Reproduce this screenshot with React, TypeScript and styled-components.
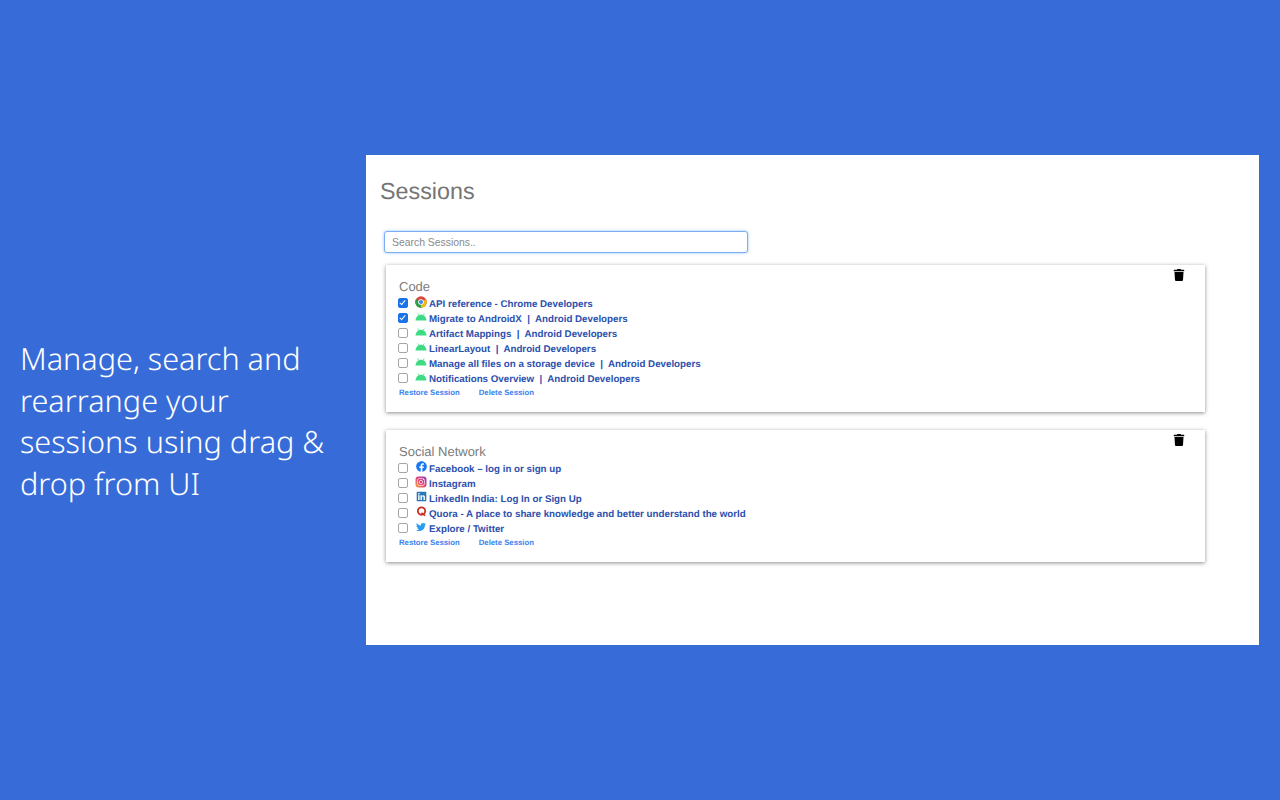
import React from 'react';
import styled, { createGlobalStyle } from 'styled-components';
import { FaFacebook, FaLinkedin, FaTrash, FaTwitter } from 'react-icons/fa';

const GlobalStyle = createGlobalStyle`
  html, body {
    margin: 0;
    padding: 0;
    background: #376cd8;
    text-rendering: geometricPrecision;
  }
`;

type Tab = { title: string; icon: React.ReactNode; checked?: boolean };

function ChromeIcon() {
  return (
    <svg width='12' height='12' viewBox='0 0 24 24'>
      <circle cx='12' cy='12' r='11.5' fill='#d9463a' />
      <path d='M12 12 L22 6.5 A11.5 11.5 0 0 1 12 23.5 Z' fill='#f2b90f' />
      <path d='M12 12 L12 23.5 A11.5 11.5 0 0 1 2 6.5 Z' fill='#2f9e50' />
      <circle cx='12' cy='12' r='5.6' fill='#fff' />
      <circle cx='12' cy='12' r='4.2' fill='#4a84e8' />
    </svg>
  );
}

function AndroidIcon() {
  return (
    <svg width='12' height='8' viewBox='0 0 24 16'>
      <path d='M1 15 C1.5 8 6 3.5 12 3.5 C18 3.5 22.5 8 23 15 Z' fill='#3ddc84' />
      <path d='M5.5 1 L8 5.5 M18.5 1 L16 5.5' stroke='#3ddc84' strokeWidth='1.6' />
    </svg>
  );
}

function InstagramIcon() {
  return (
    <svg width='12' height='12' viewBox='0 0 24 24'>
      <defs>
        <linearGradient id='insta' x1='0' y1='1' x2='1' y2='0'>
          <stop offset='0' stopColor='#f9a13c' />
          <stop offset='0.5' stopColor='#e0447c' />
          <stop offset='1' stopColor='#8a3ac0' />
        </linearGradient>
      </defs>
      <rect x='1' y='1' width='22' height='22' rx='6' fill='url(#insta)' />
      <rect x='5' y='5' width='14' height='14' rx='4' fill='none' stroke='#fff' strokeWidth='1.6' opacity='0.8' />
      <circle cx='12' cy='12' r='3.4' fill='none' stroke='#fff' strokeWidth='1.6' opacity='0.8' />
      <circle cx='17' cy='7' r='1.2' fill='#fff' />
    </svg>
  );
}

function QuoraIcon() {
  return (
    <svg width='11' height='11' viewBox='0 0 24 24'>
      <circle cx='12' cy='11' r='8' fill='none' stroke='#c8302a' strokeWidth='4' />
      <path d='M12 15 L20 21' stroke='#c8302a' strokeWidth='3.5' />
    </svg>
  );
}

const codeTabs: Tab[] = [
  { title: 'API reference - Chrome Developers', icon: <ChromeIcon />, checked: true },
  { title: 'Migrate to AndroidX  |  Android Developers', icon: <AndroidIcon />, checked: true },
  { title: 'Artifact Mappings  |  Android Developers', icon: <AndroidIcon /> },
  { title: 'LinearLayout  |  Android Developers', icon: <AndroidIcon /> },
  { title: 'Manage all files on a storage device  |  Android Developers', icon: <AndroidIcon /> },
  { title: 'Notifications Overview  |  Android Developers', icon: <AndroidIcon /> },
];

const socialTabs: Tab[] = [
  { title: 'Facebook – log in or sign up', icon: <FaFacebook color='#1877f2' size={11} /> },
  { title: 'Instagram', icon: <InstagramIcon /> },
  { title: 'LinkedIn India: Log In or Sign Up', icon: <FaLinkedin color='#2878b5' size={11} /> },
  { title: 'Quora - A place to share knowledge and better understand the world', icon: <QuoraIcon /> },
  { title: 'Explore / Twitter', icon: <FaTwitter color='#2a9df0' size={10} /> },
];

function SessionCard({ name, tabs }: { name: string; tabs: Tab[] }) {
  return (
    <Card>
      <DeleteIcon>
        <FaTrash size={12} />
      </DeleteIcon>
      <CardTitle>{name}</CardTitle>
      {tabs.map((tab) => (
        <TabRow key={tab.title}>
          <TabCheck type='checkbox' defaultChecked={tab.checked} />
          <TabIcon>{tab.icon}</TabIcon>
          <TabLink>{tab.title}</TabLink>
        </TabRow>
      ))}
      <Actions>
        <ActionLink>Restore Session</ActionLink>
        <ActionLink>Delete Session</ActionLink>
      </Actions>
    </Card>
  );
}

export default function App() {
  return (
    <Page>
      <GlobalStyle />
      <Caption>Manage, search and rearrange your sessions using drag &amp; drop from UI</Caption>
      <Panel>
        <Title>Sessions</Title>
        <Search placeholder='Search Sessions..' />
        <CardList>
          <SessionCard name='Code' tabs={codeTabs} />
          <SessionCard name='Social Network' tabs={socialTabs} />
        </CardList>
      </Panel>
    </Page>
  );
}

const Page = styled.div`
  display: flex;
  box-sizing: border-box;
  width: 1280px;
  height: 800px;
  padding-top: 155px;
  background: #376cd8;
  overflow: hidden;
`;

const Caption = styled.div`
  box-sizing: border-box;
  flex: 0 0 366px;
  padding: 183px 30px 0 20px;
  color: #fff;
  font-family: 'Noto Sans', sans-serif;
  font-size: 30.6px;
  font-weight: 300;
  line-height: 41.5px;
`;

const Panel = styled.div`
  box-sizing: border-box;
  width: 893px;
  height: 490px;
  padding: 22px 54px 0 14px;
  background: #fff;
  font-family: 'Liberation Sans', Arial, sans-serif;
`;

const Title = styled.h1`
  margin: 0;
  color: #757575;
  font-size: 23.3px;
  font-weight: 400;
  line-height: 28px;
`;

const Search = styled.input`
  display: block;
  box-sizing: border-box;
  width: 364px;
  height: 22px;
  margin: 26px 0 12px 4px;
  padding: 0 7px;
  border: 1px solid #7ab0f2;
  border-radius: 3px;
  box-shadow: 0 0 3px rgba(80, 150, 240, 0.6);
  font-family: inherit;
  font-size: 10.4px;
  outline: none;

  &::placeholder {
    color: #8a8a8a;
  }
`;

const CardList = styled.div`
  display: flex;
  flex-direction: column;
  gap: 18px;
  margin-left: 6px;
`;

const Card = styled.div`
  position: relative;
  box-sizing: border-box;
  padding: 14px 13px 13px;
  background: #fff;
  box-shadow: 0 1px 4px rgba(0, 0, 0, 0.45);
`;

const DeleteIcon = styled.span`
  position: absolute;
  top: 3px;
  right: 20px;
  color: #000;
`;

const CardTitle = styled.div`
  margin-bottom: 2px;
  color: #7b7b7b;
  font-size: 13px;
  line-height: 15px;
`;

const TabRow = styled.div`
  display: flex;
  align-items: center;
  height: 15px;
`;

const TabCheck = styled.input`
  position: relative;
  flex: 0 0 10px;
  box-sizing: border-box;
  appearance: none;
  width: 10px;
  height: 10px;
  margin: 0 7px 2px -1px;
  border: 1px solid #a6a6a6;
  border-radius: 2px;
  background: #fff;

  &:checked {
    border-color: #1a73e8;
    background: #1a73e8;
  }

  &:checked::after {
    content: '';
    position: absolute;
    left: 2px;
    top: 0;
    width: 2px;
    height: 5px;
    border: solid #fff;
    border-width: 0 1px 1px 0;
    transform: rotate(40deg);
  }
`;

const TabIcon = styled.span`
  display: flex;
  flex: 0 0 12px;
  align-items: center;
  justify-content: center;
  height: 12px;
  margin: 0 2px 4px 0;
`;

const TabLink = styled.a`
  padding-top: 2px;
  color: #2b50ad;
  font-size: 9.75px;
  font-weight: 700;
  white-space: pre;
`;

const Actions = styled.div`
  display: flex;
  gap: 19px;
  margin-top: 1px;
`;

const ActionLink = styled.a`
  color: #3d82f0;
  font-size: 7.75px;
  font-weight: 700;
  line-height: 12px;
`;
